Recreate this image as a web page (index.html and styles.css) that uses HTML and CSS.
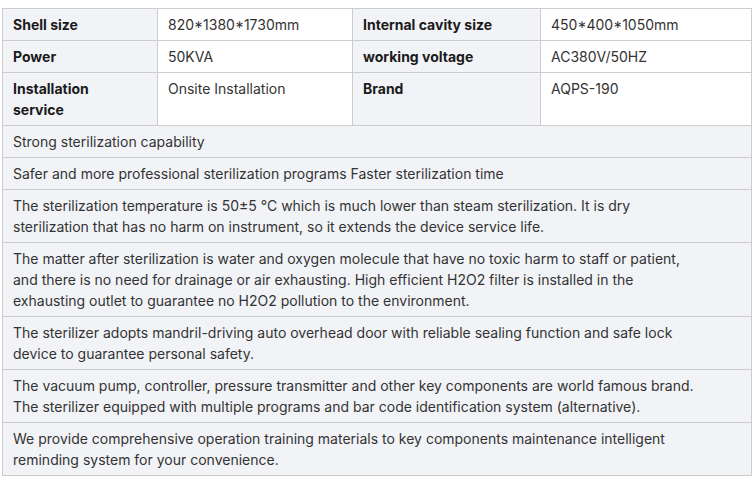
FILE: index.html
```html
<!DOCTYPE html>
<html>
<head>
<meta charset="utf-8">
<link rel="stylesheet" href="styles.css">
</head>
<body>
<div class="wrap">
<table class="spec">
<colgroup>
<col class="c1"><col class="c2"><col class="c3"><col class="c4">
</colgroup>
<tbody>
<tr><th>Shell size</th><td>820*1380*1730mm</td><th>Internal cavity size</th><td>450*400*1050mm</td></tr>
<tr><th>Power</th><td>50KVA</td><th>working voltage</th><td>AC380V/50HZ</td></tr>
<tr><th>Installation service</th><td>Onsite Installation</td><th>Brand</th><td>AQPS-190</td></tr>
<tr><td class="full" colspan="4">Strong sterilization capability</td></tr>
<tr><td class="full" colspan="4">Safer and more professional sterilization programs Faster sterilization time</td></tr>
<tr><td class="full" colspan="4">The sterilization temperature is 50±5 °C which is much lower than steam sterilization. It is dry sterilization that has no harm on instrument, so it extends the device service life.</td></tr>
<tr><td class="full" colspan="4">The matter after sterilization is water and oxygen molecule that have no toxic harm to staff or patient, and there is no need for drainage or air exhausting. High efficient H2O2 filter is installed in the exhausting outlet to guarantee no H2O2 pollution to the environment.</td></tr>
<tr><td class="full" colspan="4">The sterilizer adopts mandril-driving auto overhead door with reliable sealing function and safe lock device to guarantee personal safety.</td></tr>
<tr><td class="full" colspan="4">The vacuum pump, controller, pressure transmitter and other key components are world famous brand. The sterilizer equipped with multiple programs and bar code identification system (alternative).</td></tr>
<tr><td class="full" colspan="4">We provide comprehensive operation training materials to key components maintenance intelligent reminding system for your convenience.</td></tr>
</tbody>
</table>
</div>
</body>
</html>
```

FILE: styles.css
```css
html, body {
  margin: 0;
  padding: 0;
  background: #ffffff;
}
.wrap {
  padding: 8px 2px 0 2px;
}
.spec {
  border-collapse: collapse;
  table-layout: fixed;
  width: 749px;
  font-family: Inter, "Noto Sans", sans-serif;
  font-size: 14px;
  line-height: 21px;
  color: #333333;
}
.c1 { width: 155px; }
.c2 { width: 195px; }
.c3 { width: 188px; }
.c4 { width: 211px; }
.spec th, .spec td {
  border: 1px solid #cccccc;
  padding: 5px 10px;
  text-align: left;
  vertical-align: top;
}
.spec th {
  background: #f2f3f7;
  font-weight: 700;
  color: #1a1a1a;
  padding-right: 30px;
}
.spec td {
  background: #ffffff;
}
.spec td.full {
  background: #f2f3f7;
  padding-right: 46px;
}
```
